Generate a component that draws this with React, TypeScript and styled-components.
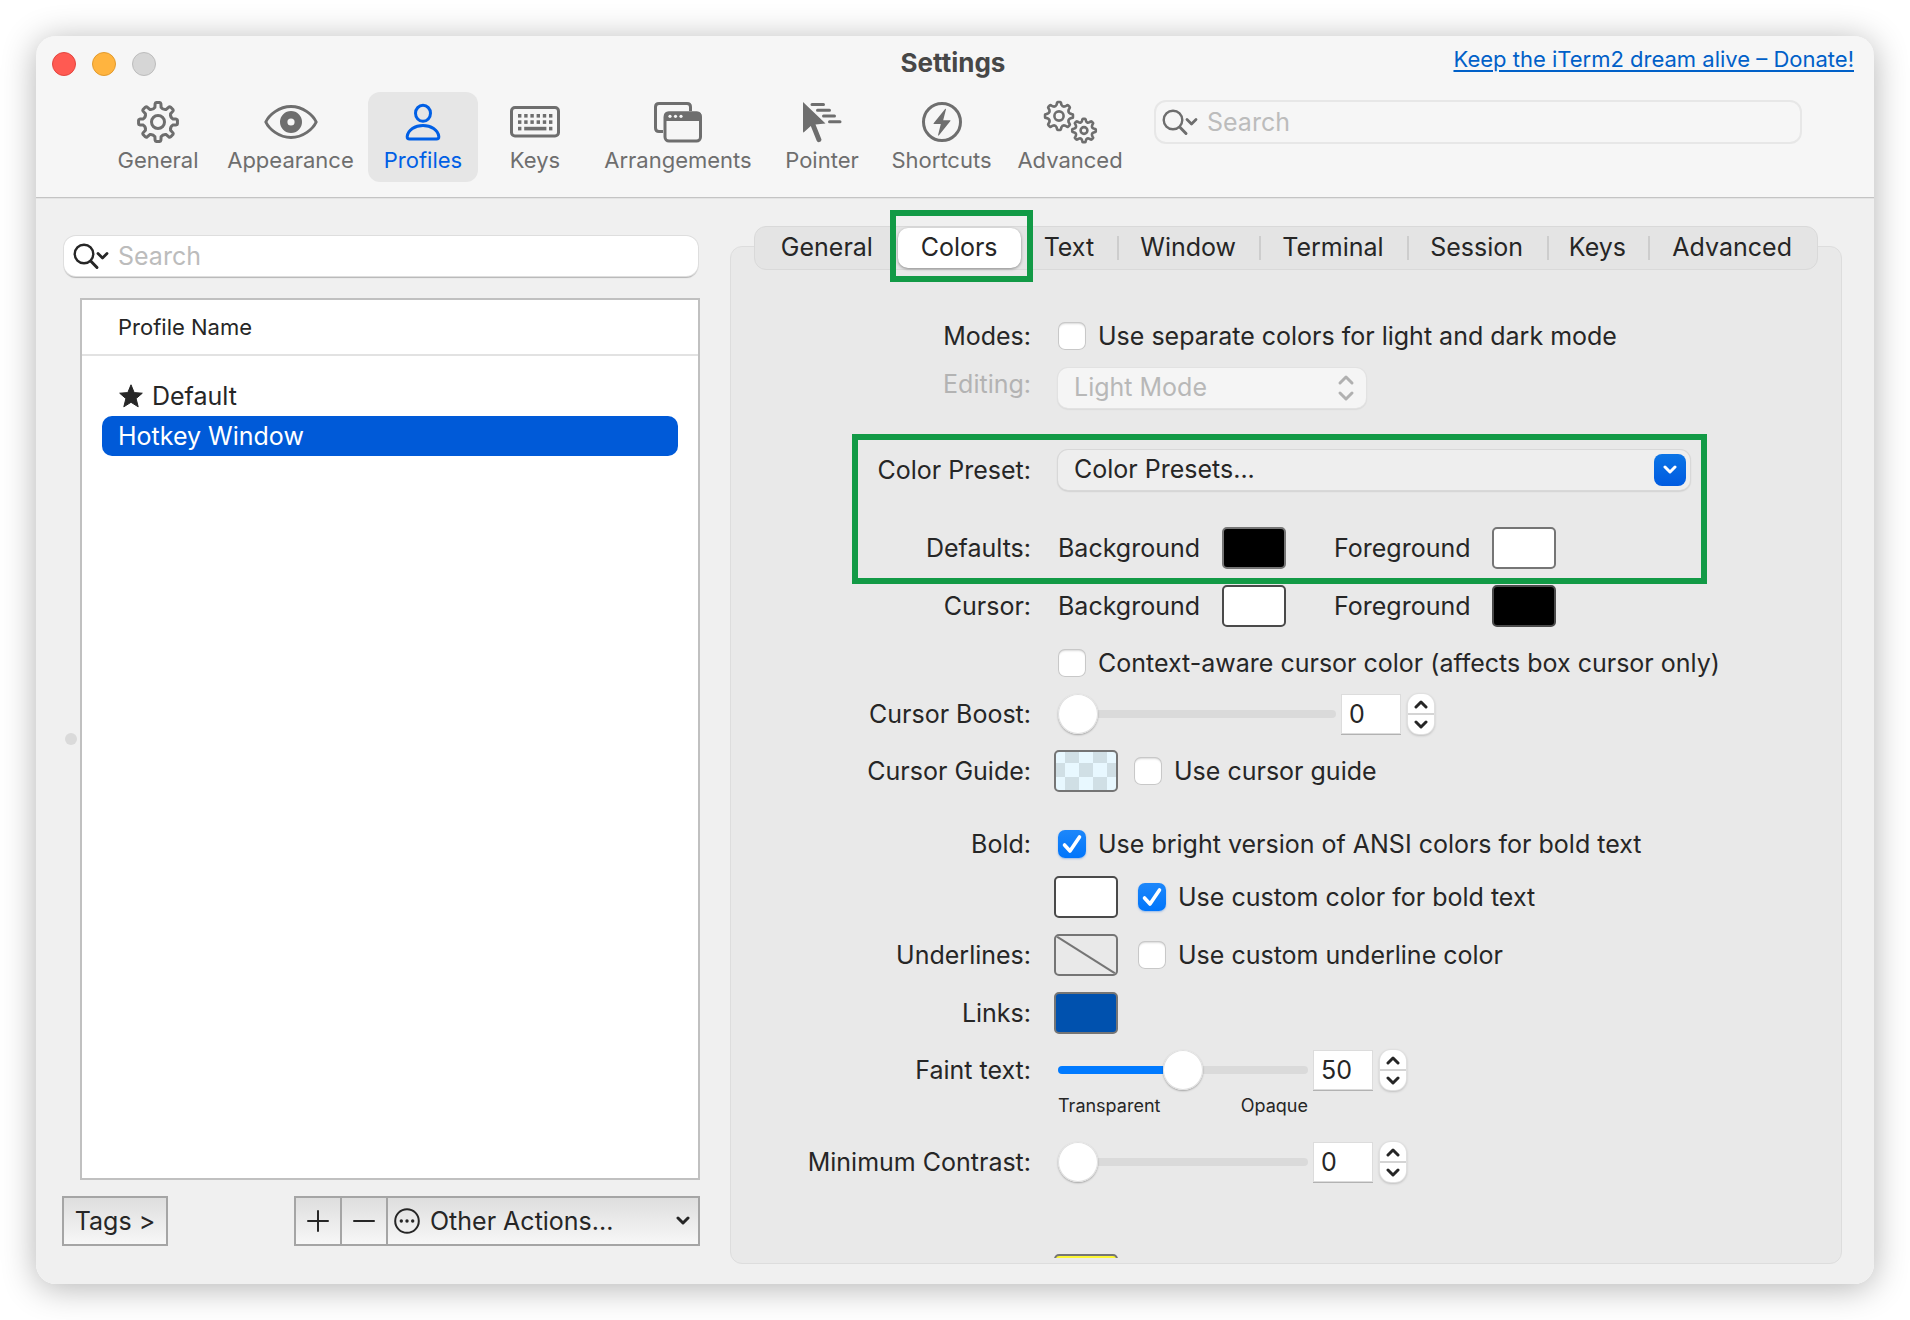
import React, { useState } from "react";
import styled, { createGlobalStyle, css } from "styled-components";

const ink = "#262626";
const grey = "#6e6e6e";
const accent = "#007aff";

const GlobalStyle = createGlobalStyle`
  * { box-sizing: border-box; }
  body { margin: 0; background: #fff; }
  body, button, input, select, table {
    font-family: Inter, "Liberation Sans", sans-serif;
    font-size: 25px;
    color: ${ink};
  }
  button, input, select { margin: 0; padding: 0; border: 0; background: none; outline: none; }
`;

/* ---------- window ---------- */

const Desktop = styled.div`
  height: 100vh;
  min-height: 800px;
  padding: 36px;
`;

const Window = styled.div`
  display: flex;
  flex-direction: column;
  height: 100%;
  border-radius: 20px;
  overflow: hidden;
  background: #f0f0f0;
`;

const WindowShadow = styled.div`
  height: 100%;
  border-radius: 20px;
  box-shadow: 0 4px 34px rgba(0, 0, 0, 0.3);
`;

const Header = styled.header`
  flex: none;
  padding-bottom: 15px;
  background: #f6f6f6;
  border-bottom: 1px solid #c4c4c4;
  box-shadow: 0 1px 0 #e4e4e4;
`;

const TitleBar = styled.div`
  display: grid;
  grid-template-columns: 1fr auto 1fr;
  align-items: center;
  height: 56px;
  padding: 0 20px 0 16px;
`;

const TrafficLights = styled.div`
  display: flex;
  gap: 16px;
`;

const Light = styled.button<{ $fill: string; $rim: string }>`
  width: 24px;
  height: 24px;
  border-radius: 50%;
  background: ${(p) => p.$fill};
  border: 1px solid ${(p) => p.$rim};
`;

const Title = styled.h1`
  margin: 0;
  padding-bottom: 2px;
  font-size: 26px;
  line-height: 32px;
  font-weight: 700;
  color: #474747;
`;

const DonateLink = styled.a`
  justify-self: end;
  padding-bottom: 10px;
  font-size: 22px;
  line-height: 28px;
  color: #0060c8;
  text-decoration: underline;
  text-decoration-thickness: 2px;
  text-underline-offset: 3px;
`;

const Toolbar = styled.div`
  display: flex;
  align-items: flex-start;
  padding: 0 72px 0 67px;
`;

const ToolItem = styled.button<{ $width: number; $active?: boolean }>`
  display: flex;
  flex-direction: column;
  align-items: center;
  flex: 0 0 ${(p) => p.$width}px;
  height: 90px;
  padding-top: 6px;
  border-radius: 12px;
  font-size: 22px;
  line-height: 28px;
  color: ${(p) => (p.$active ? "#005fe5" : grey)};
  background: ${(p) => (p.$active ? "#e6e6e6" : "transparent")};
`;

const IconSlot = styled.span`
  display: grid;
  place-items: center;
  height: 48px;
`;

const SearchBox = styled.label<{ $filled?: boolean }>`
  display: flex;
  align-items: center;
  gap: 8px;
  height: 44px;
  padding-left: 5px;
  border-radius: 12px;
  color: ${(p) => (p.$filled ? ink : grey)};
  ${(p) =>
    p.$filled
      ? css`
          height: 40px;
          margin: 0 2px;
          padding-left: 8px;
          background: #fff;
          box-shadow: 0 0 0 1px #dedede, 0 2px 1px #b4b4b4;
        `
      : css`
          flex: 1;
          margin: 8px 0 0 17px;
          border: 2px solid #e7e7e7;
        `}
`;

const SearchInput = styled.input`
  flex: 1;
  min-width: 0;
  height: 36px;
  &::placeholder {
    color: #bcbcbc;
    opacity: 1;
  }
`;

/* ---------- sidebar ---------- */

const Body = styled.div`
  flex: 1;
  min-height: 0;
  display: flex;
`;

const Sidebar = styled.aside`
  flex: 0 0 664px;
  display: flex;
  flex-direction: column;
  padding: 38px 0 38px 26px;
`;

const ListArea = styled.div`
  flex: 1;
  min-height: 0;
  display: flex;
  margin: 22px 0 16px;
`;

const Gutter = styled.div`
  flex: 0 0 18px;
  display: grid;
  place-items: center;
`;

const GripDot = styled.span`
  width: 12px;
  height: 12px;
  border-radius: 50%;
  background: #dadada;
`;

const ListFrame = styled.div`
  flex: 1;
  border: 2px solid #c0c0c0;
  background: #fff;
  overflow: auto;
`;

const ProfileTable = styled.table`
  width: 100%;
  border-spacing: 0;
`;

const ProfileHead = styled.th`
  height: 56px;
  padding: 0 0 0 36px;
  border-bottom: 2px solid #e2e2e2;
  font-size: 22px;
  font-weight: 400;
  text-align: left;
`;

const ProfileBody = styled.tbody`
  &::before {
    content: "";
    display: block;
    height: 20px;
  }
`;

const ProfileCell = styled.td`
  padding: 0 20px;
`;

const ProfileRow = styled.div<{ $selected?: boolean }>`
  display: flex;
  align-items: center;
  gap: 8px;
  height: 40px;
  padding: 0 16px;
  border-radius: 10px;
  color: ${(p) => (p.$selected ? "#fff" : ink)};
  background: ${(p) => (p.$selected ? "#005ad8" : "transparent")};
`;

const SidebarFooter = styled.div`
  display: flex;
  justify-content: space-between;
  height: 50px;
`;

const bevel = css`
  border: 2px solid #a5a5a5;
  background: linear-gradient(#dedede, #f7f7f7);
`;

const TagsButton = styled.button`
  ${bevel}
  width: 106px;
`;

const ActionGroup = styled.div`
  ${bevel}
  display: flex;
  width: 406px;
`;

const SquareButton = styled.button`
  flex: 0 0 46px;
  display: grid;
  place-items: center;
  border-right: 2px solid #a5a5a5;
`;

const ActionMenu = styled.div`
  flex: 1;
  display: grid;
  grid-template-columns: 26px 1fr 14px;
  column-gap: 10px;
  align-items: center;
  padding: 0 8px 0 6px;
`;

const PlainSelect = styled.select`
  appearance: none;
  width: 100%;
  height: 100%;
`;

/* ---------- tabs ---------- */

const Main = styled.main`
  flex: 1;
  min-width: 0;
  display: flex;
  flex-direction: column;
  padding: 28px 32px 20px 30px;
`;

const TabBar = styled.div`
  flex: none;
  position: relative;
  z-index: 1;
  display: flex;
  height: 44px;
  margin: 0 24px -24px;
  padding: 1px;
  border: 1px solid #d9d9d9;
  border-radius: 12px;
  background: #e4e4e4;
`;

const TabSlot = styled.div<{ $grow: number; $rule?: boolean; $marked?: boolean }>`
  position: relative;
  flex: ${(p) => p.$grow} 1 0;
  display: flex;
  align-items: center;
  ${(p) =>
    p.$rule &&
    css`
      &::before {
        content: "";
        width: 2px;
        height: 24px;
        margin-right: -2px;
        background: #cdcdcd;
      }
    `}
  ${(p) =>
    p.$marked &&
    css`
      &::after {
        content: "";
        position: absolute;
        inset: -18px -12px -14px -8px;
        border: 6px solid #129a46;
        pointer-events: none;
      }
    `}
`;

const Tab = styled.button<{ $active?: boolean }>`
  flex: 1;
  height: 40px;
  padding-bottom: 2px;
  border-radius: 10px;
  ${(p) =>
    p.$active &&
    css`
      background: #fff;
      box-shadow: 0 1px 3px rgba(0, 0, 0, 0.4);
    `}
`;

/* ---------- settings form ---------- */

const Panel = styled.section`
  flex: 1;
  min-height: 0;
  display: flex;
  padding-bottom: 5px;
  border: 1px solid #dddddd;
  border-radius: 12px;
  background: #e9e9e9;
`;

const FormScroll = styled.div`
  flex: 1;
  padding-top: 68px;
  overflow-y: auto;
  scrollbar-width: none;
`;

const Row = styled.div<{ $gap?: number; $top?: boolean }>`
  display: flex;
  align-items: ${(p) => (p.$top ? "flex-start" : "center")};
  gap: 23px;
  height: 42px;
  margin-top: ${(p) => p.$gap ?? 0}px;
`;

const Name = styled.label<{ $dim?: boolean }>`
  flex: 0 0 300px;
  text-align: right;
  line-height: 32px;
  color: ${(p) => (p.$dim ? "#b3b3b3" : ink)};
`;

const Controls = styled.div<{ $inset?: boolean }>`
  flex: 1;
  display: flex;
  align-items: center;
  padding-left: ${(p) => (p.$inset ? 4 : 0)}px;
`;

const MarkedGroup = styled.div`
  position: relative;
  margin-top: 39px;
  &::after {
    content: "";
    position: absolute;
    inset: -15px 134px -15px 121px;
    border: 6px solid #129a46;
    pointer-events: none;
  }
`;

const CheckLabel = styled.label<{ $space?: number }>`
  display: flex;
  align-items: center;
  gap: 12px;
  margin-left: ${(p) => p.$space ?? 0}px;
  line-height: 32px;
  white-space: nowrap;
`;

const Checkbox = styled.input`
  appearance: none;
  display: grid;
  place-items: center;
  width: 28px;
  height: 28px;
  border-radius: 7px;
  background: #fff;
  box-shadow: inset 0 0 0 1px #c8c8c8, inset 0 2px 2px #d9d9d9;
`;

const CheckStack = styled.span`
  display: grid;
  & > * {
    grid-area: 1 / 1;
  }
  & > svg {
    display: none;
    pointer-events: none;
  }
  & > input:checked {
    background: linear-gradient(#1d87fa, #0075fb);
    box-shadow: 0 1px 2px rgba(0, 100, 230, 0.35);
  }
  & > input:checked + svg {
    display: block;
  }
`;

const PopUp = styled.div<{ $dim?: boolean }>`
  display: grid;
  align-items: center;
  height: 40px;
  border-radius: 10px;
  ${(p) =>
    p.$dim
      ? css`
          width: 308px;
          background: #f5f5f5;
          box-shadow: 0 0 0 1px #e2e2e2, 0 1px 2px rgba(0, 0, 0, 0.2);
        `
      : css`
          flex: 1;
          margin-right: 151px;
          background: #eeeeee;
          box-shadow: 0 0 0 1px #d8d8d8, 0 1px 2px rgba(0, 0, 0, 0.3);
        `}
  & > * {
    grid-area: 1 / 1;
  }
  & > select {
    appearance: none;
    height: 40px;
    padding: 0 0 2px 16px;
    color: ${(p) => (p.$dim ? "#b8b8b8" : ink)};
    opacity: 1;
  }
  & > svg,
  & > span {
    justify-self: end;
    pointer-events: none;
  }
`;

const ArrowSlot = styled.span`
  display: grid;
  margin-right: 11px;
  color: #b0b0b0;
`;

const BlueArrow = styled.span`
  display: grid;
  place-items: center;
  width: 32px;
  height: 32px;
  margin-right: 4px;
  border-radius: 8px;
  color: #fff;
  background: linear-gradient(#0a74e6, #005be0);
`;

const WellLabel = styled.span<{ $second?: boolean }>`
  flex: 0 0 ${(p) => (p.$second ? 206 : 164)}px;
  padding-left: ${(p) => (p.$second ? 48 : 0)}px;
  line-height: 32px;
`;

const WellButton = styled.button<{ $color: string; $rim?: string }>`
  flex: none;
  display: grid;
  overflow: hidden;
  width: 64px;
  height: 42px;
  border: 2px solid ${(p) => p.$rim ?? "#757575"};
  border-radius: 5px;
  background: ${(p) => p.$color};
`;

const Slider = styled.input<{ $width: number }>`
  appearance: none;
  width: ${(p) => p.$width}px;
  height: 40px;
  margin-right: 5px;
  &::-webkit-slider-runnable-track {
    height: 8px;
    border-radius: 4px;
    background: linear-gradient(
      to right,
      ${accent} calc(20px + (100% - 40px) * var(--ratio)),
      #dadada calc(20px + (100% - 40px) * var(--ratio))
    );
  }
  &::-webkit-slider-thumb {
    appearance: none;
    width: 40px;
    height: 40px;
    margin-top: -16px;
    border-radius: 50%;
    background: #fff;
    box-shadow: inset 0 0 0 1px #e0e0e0, 0 1px 2px rgba(0, 0, 0, 0.3);
  }
`;

const NumberField = styled.input`
  width: 60px;
  height: 40px;
  padding-left: 8px;
  background: #fff;
  box-shadow: inset 0 0 0 1px #dcdcdc, 0 1px 0 #b2b2b2;
`;

const Stepper = styled.div`
  display: flex;
  flex-direction: column;
  width: 26px;
  height: 40px;
  margin-left: 7px;
  border-radius: 11px;
  overflow: hidden;
  background: #fff;
  box-shadow: 0 0 0 1px #e0e0e0, 0 1px 3px rgba(0, 0, 0, 0.35);
`;

const StepButton = styled.button`
  flex: 1;
  display: grid;
  place-items: center;
  & + & {
    border-top: 2px solid #d4d4d4;
  }
`;

const Scale = styled.div`
  display: flex;
  justify-content: space-between;
  width: 250px;
  margin: 4px 0 0 327px;
  font-size: 18px;
  line-height: 22px;
`;

/* ---------- icons ---------- */

function gearPath(cx: number, cy: number, outer: number, root: number) {
  const at = (r: number, deg: number) => {
    const a = ((deg - 90) * Math.PI) / 180;
    return `${(cx + r * Math.cos(a)).toFixed(2)} ${(cy + r * Math.sin(a)).toFixed(2)}`;
  };
  let d = "";
  for (let i = 0; i < 8; i++) {
    const t = i * 45;
    d += `${i ? "L" : "M"}${at(root + 1, t - 12)}L${at(outer - 1, t - 9)}Q${at(outer, t - 8)} ${at(outer, t - 5)}`;
    d += `L${at(outer, t + 5)}Q${at(outer, t + 8)} ${at(outer - 1, t + 9)}L${at(root + 1, t + 12)}`;
    d += `Q${at(root - 1, t + 22.5)} ${at(root + 1, t + 33)}`;
  }
  return d + "Z";
}

const GearIcon = () => (
  <svg width="44" height="44" viewBox="0 0 44 44" fill="none" stroke="currentColor" strokeWidth="3" strokeLinejoin="round">
    <path d={gearPath(22, 22, 19.5, 14)} />
    <circle cx="22" cy="22" r="6.5" />
  </svg>
);

const EyeIcon = () => (
  <svg width="54" height="36" viewBox="0 0 54 36" fill="none" stroke="currentColor" strokeWidth="3">
    <path d="M1.8 18C5 11 15 2.5 27 2.5S49 11 52.2 18C49 25 39 33.500 27 33.500S5 25 1.800 18Z" strokeLinejoin="round" />
    <circle cx="27" cy="18" r="7.300" strokeWidth="7.400" />
  </svg>
);

const PersonIcon = () => (
  <svg width="36" height="38" viewBox="0 0 36 38" fill="none" stroke="currentColor" strokeWidth="3">
    <ellipse cx="18" cy="10.300" rx="7.500" ry="8" />
    <path d="M4.500 36H31.500Q34 36 33.800 33.500C33 27 26 22.500 18 22.500S3 27 2.200 33.500Q2 36 4.500 36Z" />
  </svg>
);

const KeyboardIcon = () => (
  <svg width="50" height="32" viewBox="0 0 50 32" fill="currentColor">
    <rect x="1.500" y="1.500" width="47" height="28.500" rx="3.500" fill="none" stroke="currentColor" strokeWidth="3" />
    {[8, 14.200, 20.400, 26.600, 32.800, 39].map((x) => (
      <React.Fragment key={x}>
        <rect x={x} y="8" width="3.400" height="3.600" />
        <rect x={x} y="14.300" width="3.400" height="3.600" />
      </React.Fragment>
    ))}
    <rect x="8" y="20.800" width="3.400" height="3.600" />
    <rect x="14.200" y="20.800" width="22.200" height="3.600" />
    <rect x="39" y="20.800" width="3.400" height="3.600" />
  </svg>
);

const ArrangementsIcon = () => (
  <svg width="50" height="42" viewBox="0 0 50 42" fill="none" stroke="currentColor" strokeWidth="3">
    <path d="M10 30.500H6Q2.500 30.500 2.500 27V6Q2.500 2.500 6 2.500H34Q37.500 2.500 37.500 6V10" />
    <rect x="12" y="12" width="35.500" height="28" rx="4" />
    <path d="M11 20V15Q11 10.500 15.500 10.500H44Q48.500 10.500 48.500 15V20Z" fill="currentColor" stroke="none" />
    <g fill="#f6f6f6" stroke="none">
      <circle cx="17" cy="15.300" r="1.600" />
      <circle cx="22.500" cy="15.300" r="1.600" />
      <circle cx="28" cy="15.300" r="1.600" />
    </g>
  </svg>
);

const PointerIcon = () => (
  <svg width="42" height="42" viewBox="0 0 42 42" fill="currentColor">
    <path d="M2 1L24.500 22.500L14.500 23.500L20.500 38.500Q20.500 40.500 18.500 41Q16.500 41.600 15.800 40L9.800 25L2.600 31.500Q2 31.500 2 30Z" />
    <g stroke="currentColor" strokeWidth="3" strokeLinecap="round">
      <path d="M11 3.500H22.500M16.500 9.300H28.500M22.500 15H33.500M28.500 20.800H39" />
    </g>
  </svg>
);

const BoltIcon = () => (
  <svg width="42" height="42" viewBox="0 0 42 42" fill="currentColor">
    <circle cx="21" cy="21" r="18.500" fill="none" stroke="currentColor" strokeWidth="3" />
    <path d="M24.300 7.800L12.600 22.200Q12.200 23 13 23H19.800L17 34.200Q17.200 34.900 17.800 34.400L29.400 20Q29.800 19.200 29 19.200H22.200L25 8.200Q24.900 7.400 24.300 7.800Z" />
  </svg>
);

const TwoGearsIcon = () => (
  <svg width="56" height="46" viewBox="0 0 56 46" fill="none" stroke="currentColor" strokeWidth="2.600" strokeLinejoin="round">
    <path d={gearPath(17, 17, 14, 10.500)} />
    <circle cx="17" cy="17" r="4.600" />
    <path d={gearPath(42, 31.500, 11.800, 8.800)} />
    <circle cx="42" cy="31.500" r="3.400" />
  </svg>
);

const MagnifierIcon = () => (
  <svg width="38" height="28" viewBox="0 0 38 28" fill="none" stroke="currentColor" strokeWidth="2.400" strokeLinecap="round" strokeLinejoin="round">
    <circle cx="12" cy="12" r="9.300" />
    <path d="M18.700 19L25 25.500" strokeWidth="3" />
    <path d="M26 11.500L30.500 16L35 11.500" strokeWidth="2.800" />
  </svg>
);

const StarIcon = () => (
  <svg width="26" height="24" viewBox="0 0 26 24" fill="currentColor">
    <path d="M13 0.800L16.200 8.600L24.300 9.200L18.100 14.600L20.200 22.800L13 18.300L5.800 22.800L7.900 14.600L1.700 9.200L9.800 8.600Z" stroke="currentColor" strokeLinejoin="round" />
  </svg>
);

const Chevron = ({ up, width = 14 }: { up?: boolean; width?: number }) => (
  <svg width={width} height="10" viewBox="0 0 14 10" fill="none" stroke="currentColor" strokeWidth="3" strokeLinecap="round" strokeLinejoin="round">
    <path d={up ? "M2 8L7 3L12 8" : "M2 2L7 7L12 2"} />
  </svg>
);

const UpDownIcon = () => (
  <svg width="18" height="28" viewBox="0 0 18 28" fill="none" stroke="currentColor" strokeWidth="3" strokeLinecap="round" strokeLinejoin="round">
    <path d="M3 9L9 3L15 9M3 19L9 25L15 19" />
  </svg>
);

const MathSign = ({ plus }: { plus?: boolean }) => (
  <svg width="22" height="22" viewBox="0 0 22 22" stroke="currentColor" strokeWidth="2" strokeLinecap="round">
    <path d={plus ? "M1 11H21M11 1V21" : "M1 11H21"} />
  </svg>
);

const MoreIcon = () => (
  <svg width="26" height="26" viewBox="0 0 26 26" fill="currentColor">
    <circle cx="13" cy="13" r="11.800" fill="none" stroke="currentColor" strokeWidth="2" />
    <circle cx="7.300" cy="13" r="1.700" />
    <circle cx="13" cy="13" r="1.700" />
    <circle cx="18.700" cy="13" r="1.700" />
  </svg>
);

const TickIcon = () => (
  <svg width="28" height="28" viewBox="0 0 28 28" fill="none" stroke="#fff" strokeWidth="3.600" strokeLinecap="round" strokeLinejoin="round">
    <path d="M6.500 15L12 21L21.500 7" />
  </svg>
);

const SlashIcon = () => (
  <svg width="60" height="38" viewBox="0 0 60 38" stroke="#757575" strokeWidth="2">
    <path d="M0 0L60 38" />
  </svg>
);

/* ---------- composed controls ---------- */

const tools = [
  { label: "General", width: 110, icon: <GearIcon /> },
  { label: "Appearance", width: 155, icon: <EyeIcon /> },
  { label: "Profiles", width: 110, icon: <PersonIcon /> },
  { label: "Keys", width: 114, icon: <KeyboardIcon /> },
  { label: "Arrangements", width: 172, icon: <ArrangementsIcon /> },
  { label: "Pointer", width: 116, icon: <PointerIcon /> },
  { label: "Shortcuts", width: 123, icon: <BoltIcon /> },
  { label: "Advanced", width: 134, icon: <TwoGearsIcon /> },
];

const tabs = [
  { label: "General", grow: 142 },
  { label: "Colors", grow: 123 },
  { label: "Text", grow: 97 },
  { label: "Window", grow: 142, rule: true },
  { label: "Terminal", grow: 148, rule: true },
  { label: "Session", grow: 140, rule: true },
  { label: "Keys", grow: 102, rule: true },
  { label: "Advanced", grow: 168, rule: true },
];

function Check({ id, text, space, on = false }: { id: string; text: string; space?: number; on?: boolean }) {
  return (
    <CheckLabel htmlFor={id} $space={space}>
      <CheckStack>
        <Checkbox id={id} type="checkbox" defaultChecked={on} />
        <TickIcon />
      </CheckStack>
      {text}
    </CheckLabel>
  );
}

function SliderControl({ id, name, initial, width }: { id: string; name: string; initial: number; width: number }) {
  const [value, setValue] = useState(initial);
  const clamp = (n: number) => setValue(Math.max(0, Math.min(100, n || 0)));
  return (
    <>
      <Slider
        id={id}
        type="range"
        min={0}
        max={100}
        value={value}
        $width={width}
        style={{ "--ratio": value / 100 } as React.CSSProperties}
        onChange={(e) => clamp(+e.target.value)}
      />
      <NumberField aria-label={`${name} value`} value={value} onChange={(e) => clamp(+e.target.value)} />
      <Stepper>
        <StepButton aria-label={`Increase ${name}`} onClick={() => clamp(value + 1)}>
          <Chevron up />
        </StepButton>
        <StepButton aria-label={`Decrease ${name}`} onClick={() => clamp(value - 1)}>
          <Chevron />
        </StepButton>
      </Stepper>
    </>
  );
}

const checker = "repeating-conic-gradient(#d0dfe5 0 25%, #e8f8ff 0 50%) -5px -3px / 28px 28px";

export default function App() {
  return (
    <>
      <GlobalStyle />
      <Desktop>
        <WindowShadow>
          <Window>
            <Header>
              <TitleBar>
                <TrafficLights>
                  <Light aria-label="Close" $fill="#ff5a52" $rim="#e2463f" />
                  <Light aria-label="Minimize" $fill="#ffb43f" $rim="#e19a2e" />
                  <Light aria-label="Zoom" $fill="#d6d6d6" $rim="#bcbcbc" />
                </TrafficLights>
                <Title>Settings</Title>
                <DonateLink href="#donate">Keep the iTerm2 dream alive – Donate!</DonateLink>
              </TitleBar>
              <Toolbar>
                {tools.map((t) => (
                  <ToolItem key={t.label} $width={t.width} $active={t.label === "Profiles"}>
                    <IconSlot>{t.icon}</IconSlot>
                    {t.label}
                  </ToolItem>
                ))}
                <SearchBox>
                  <MagnifierIcon />
                  <SearchInput type="text" placeholder="Search" aria-label="Search settings" />
                </SearchBox>
              </Toolbar>
            </Header>

            <Body>
              <Sidebar>
                <SearchBox $filled>
                  <MagnifierIcon />
                  <SearchInput type="text" placeholder="Search" aria-label="Search profiles" />
                </SearchBox>
                <ListArea>
                  <Gutter>
                    <GripDot />
                  </Gutter>
                  <ListFrame>
                    <ProfileTable>
                      <thead>
                        <tr>
                          <ProfileHead>Profile Name</ProfileHead>
                        </tr>
                      </thead>
                      <ProfileBody>
                        <tr>
                          <ProfileCell>
                            <ProfileRow>
                              <StarIcon />
                              Default
                            </ProfileRow>
                          </ProfileCell>
                        </tr>
                        <tr>
                          <ProfileCell>
                            <ProfileRow $selected>Hotkey Window</ProfileRow>
                          </ProfileCell>
                        </tr>
                      </ProfileBody>
                    </ProfileTable>
                  </ListFrame>
                </ListArea>
                <SidebarFooter>
                  <TagsButton>Tags &gt;</TagsButton>
                  <ActionGroup>
                    <SquareButton aria-label="Add profile">
                      <MathSign plus />
                    </SquareButton>
                    <SquareButton aria-label="Remove profile">
                      <MathSign />
                    </SquareButton>
                    <ActionMenu>
                      <MoreIcon />
                      <PlainSelect aria-label="Other actions">
                        <option>Other Actions...</option>
                      </PlainSelect>
                      <Chevron />
                    </ActionMenu>
                  </ActionGroup>
                </SidebarFooter>
              </Sidebar>

              <Main>
                <TabBar role="tablist">
                  {tabs.map((t) => (
                    <TabSlot key={t.label} $grow={t.grow} $rule={t.rule} $marked={t.label === "Colors"}>
                      <Tab role="tab" aria-selected={t.label === "Colors"} $active={t.label === "Colors"}>
                        {t.label}
                      </Tab>
                    </TabSlot>
                  ))}
                </TabBar>
                <Panel>
                  <FormScroll>
                    <Row>
                      <Name htmlFor="modes">Modes:</Name>
                      <Controls $inset>
                        <Check id="modes" text="Use separate colors for light and dark mode" />
                      </Controls>
                    </Row>
                    <Row $gap={11} $top>
                      <Name htmlFor="editing" $dim>Editing:</Name>
                      <Controls $inset>
                        <PopUp $dim>
                          <select id="editing" disabled>
                            <option>Light Mode</option>
                          </select>
                          <ArrowSlot>
                            <UpDownIcon />
                          </ArrowSlot>
                        </PopUp>
                      </Controls>
                    </Row>
                    <MarkedGroup>
                      <Row>
                        <Name htmlFor="preset">Color Preset:</Name>
                        <Controls $inset>
                          <PopUp>
                            <select id="preset">
                              <option>Color Presets...</option>
                            </select>
                            <BlueArrow>
                              <Chevron />
                            </BlueArrow>
                          </PopUp>
                        </Controls>
                      </Row>
                      <Row $gap={36}>
                        <Name as="span">Defaults:</Name>
                        <Controls $inset>
                          <WellLabel>Background</WellLabel>
                          <WellButton aria-label="Default background" $color="#000" />
                          <WellLabel $second>Foreground</WellLabel>
                          <WellButton aria-label="Default foreground" $color="#fff" />
                        </Controls>
                      </Row>
                    </MarkedGroup>
                    <Row $gap={16}>
                      <Name as="span">Cursor:</Name>
                      <Controls $inset>
                        <WellLabel>Background</WellLabel>
                        <WellButton aria-label="Cursor background" $color="#fff" $rim="#4a4a4a" />
                        <WellLabel $second>Foreground</WellLabel>
                        <WellButton aria-label="Cursor foreground" $color="#000" $rim="#4a4a4a" />
                      </Controls>
                    </Row>
                    <Row $gap={15}>
                      <Name as="span" />
                      <Controls $inset>
                        <Check id="context" text="Context-aware cursor color (affects box cursor only)" />
                      </Controls>
                    </Row>
                    <Row $gap={9}>
                      <Name htmlFor="boost">Cursor Boost:</Name>
                      <Controls $inset>
                        <SliderControl id="boost" name="cursor boost" initial={0} width={278} />
                      </Controls>
                    </Row>
                    <Row $gap={15}>
                      <Name htmlFor="guide">Cursor Guide:</Name>
                      <Controls>
                        <WellButton aria-label="Cursor guide color" $color={checker} />
                        <Check id="guide" text="Use cursor guide" space={16} />
                      </Controls>
                    </Row>
                    <Row $gap={31}>
                      <Name htmlFor="bright">Bold:</Name>
                      <Controls $inset>
                        <Check id="bright" text="Use bright version of ANSI colors for bold text" on />
                      </Controls>
                    </Row>
                    <Row $gap={11}>
                      <Name as="span" />
                      <Controls>
                        <WellButton aria-label="Bold color" $color="#fff" $rim="#4a4a4a" />
                        <Check id="bold" text="Use custom color for bold text" space={20} on />
                      </Controls>
                    </Row>
                    <Row $gap={16}>
                      <Name htmlFor="underline">Underlines:</Name>
                      <Controls>
                        <WellButton aria-label="Underline color" $color="transparent">
                          <SlashIcon />
                        </WellButton>
                        <Check id="underline" text="Use custom underline color" space={20} />
                      </Controls>
                    </Row>
                    <Row $gap={16}>
                      <Name htmlFor="links">Links:</Name>
                      <Controls>
                        <WellButton id="links" $color="#0051ae" />
                      </Controls>
                    </Row>
                    <Row $gap={15}>
                      <Name htmlFor="faint">Faint text:</Name>
                      <Controls $inset>
                        <SliderControl id="faint" name="faint text" initial={50} width={250} />
                      </Controls>
                    </Row>
                    <Scale>
                      <span>Transparent</span>
                      <span>Opaque</span>
                    </Scale>
                    <Row $gap={24}>
                      <Name htmlFor="contrast">Minimum Contrast:</Name>
                      <Controls $inset>
                        <SliderControl id="contrast" name="minimum contrast" initial={0} width={250} />
                      </Controls>
                    </Row>
                    <Row $gap={71}>
                      <Name as="span" />
                      <Controls>
                        <WellButton aria-label="Cursor highlight color" $color="#fdf733" />
                      </Controls>
                    </Row>
                  </FormScroll>
                </Panel>
              </Main>
            </Body>
          </Window>
        </WindowShadow>
      </Desktop>
    </>
  );
}
